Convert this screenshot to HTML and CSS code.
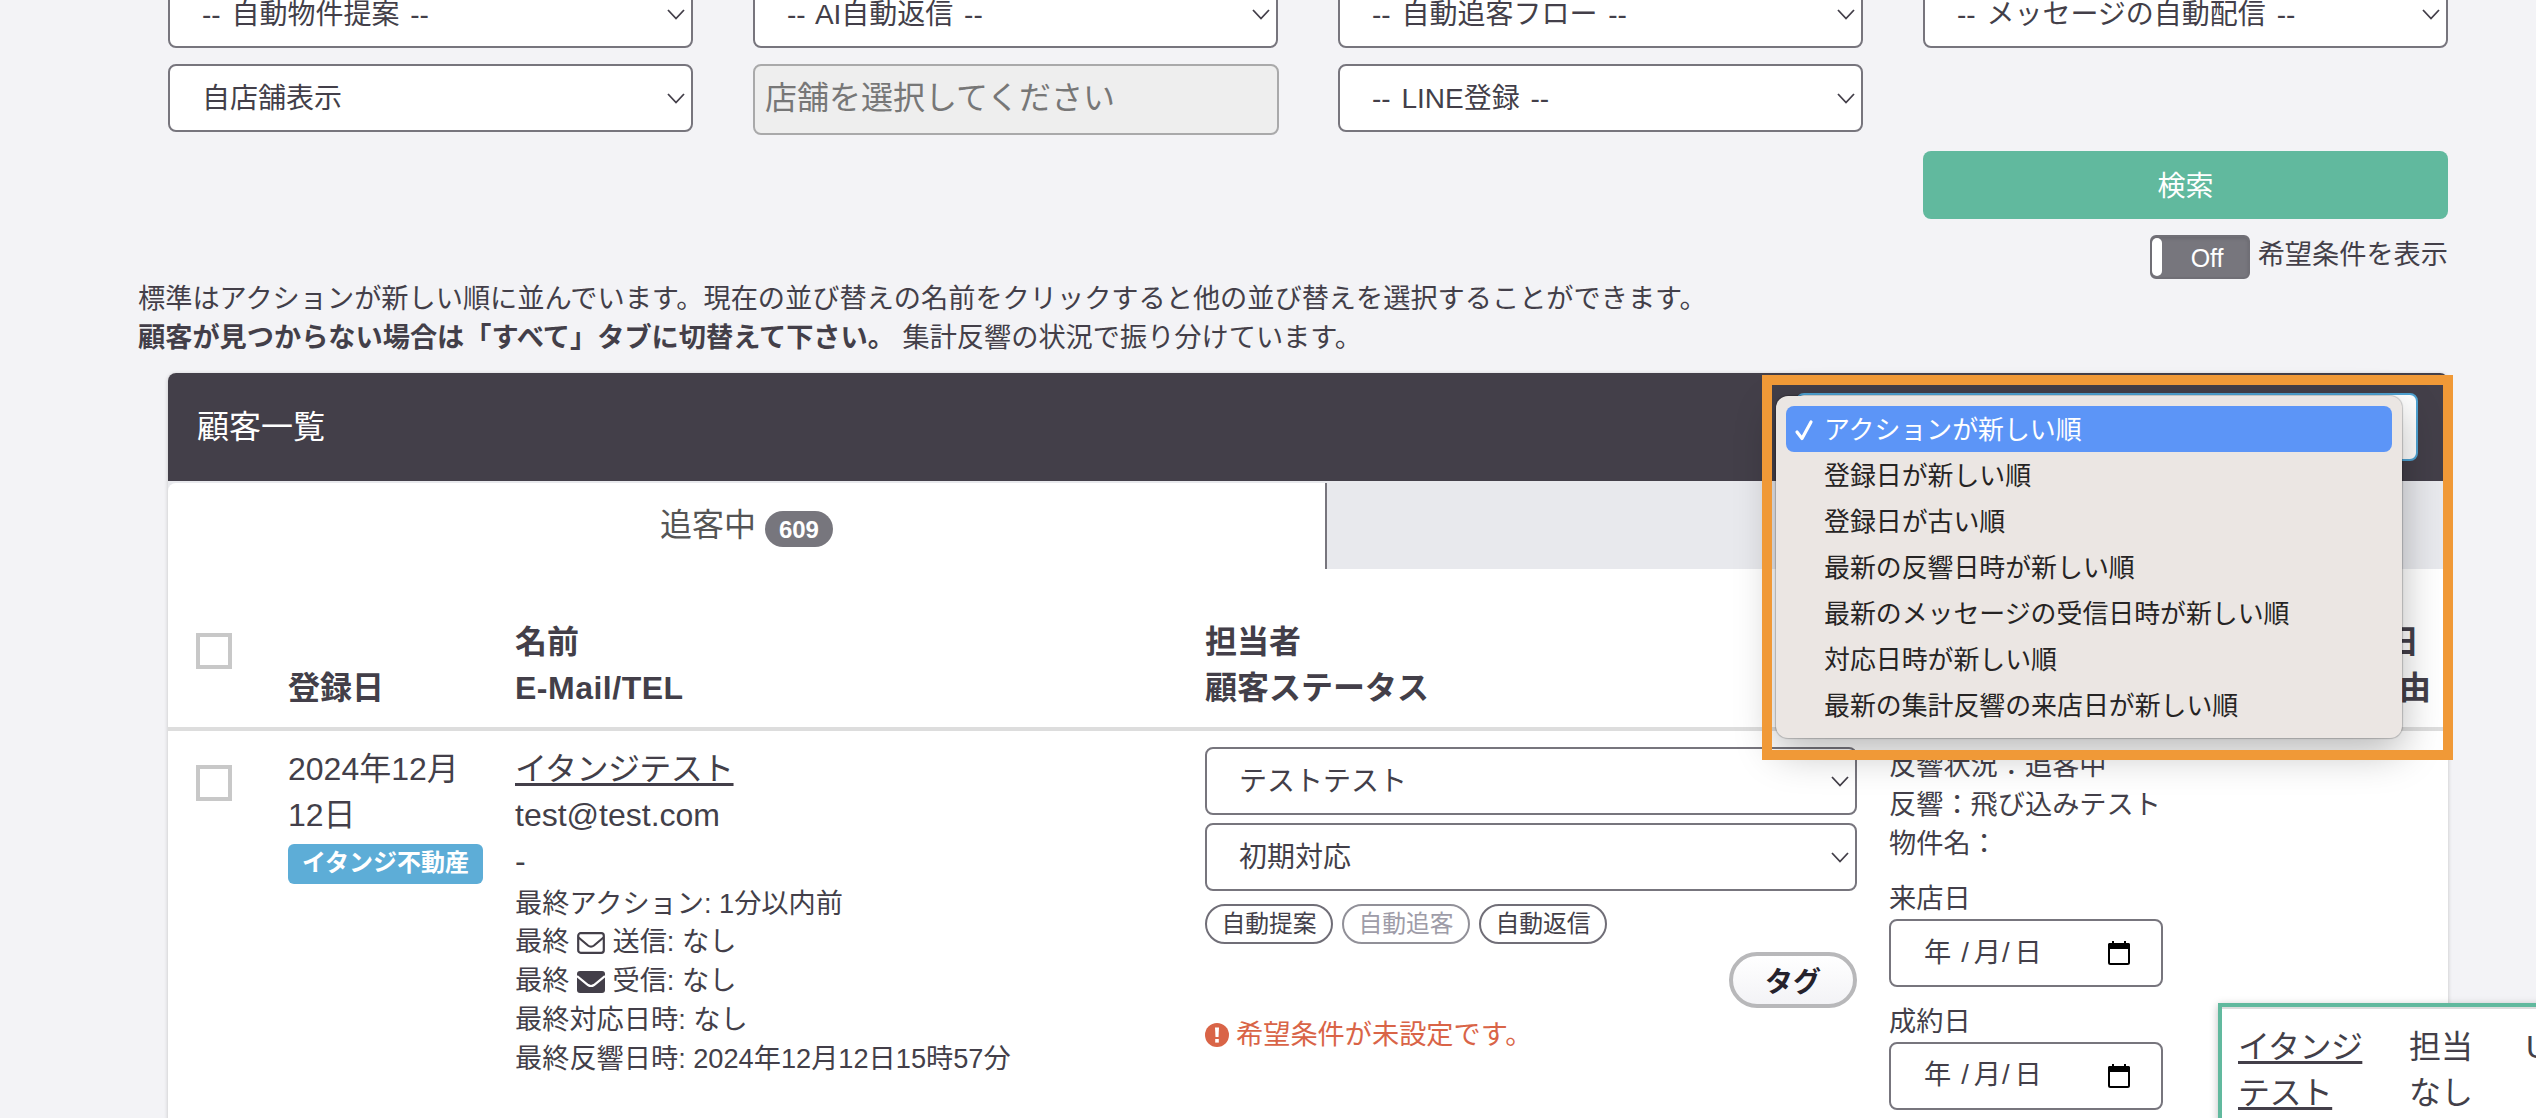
FILE: index.html
```html
<!DOCTYPE html>
<html lang="ja">
  <head>
    <meta charset="utf-8">
    <title>顧客一覧</title>
    <link rel="stylesheet" href="styles.css">
  </head>
  <body>
    <svg class="defs">
      <symbol id="chevron" viewBox="0 0 18 11"><path d="M1 1l8 8.5L17 1" fill="none" stroke="#433f49" stroke-width="1.8"/></symbol>
      <symbol id="calendar" viewBox="0 0 22 24"><path d="M5 0v3M17 0v3" stroke="#000" stroke-width="2"/><rect x="1" y="3" width="20" height="20" rx="1.5" fill="none" stroke="#000" stroke-width="2"/><path d="M0 3.5Q0 2 1.500 2h19Q22 2 22 3.500V8H0z"/></symbol>
    </svg>

    <div class="page">
      <div class="filters">
        <div class="select-wrap">
          <select class="select"><option>-- 自動物件提案 --</option></select>
          <svg class="chevron"><use href="#chevron"/></svg>
        </div>
        <div class="select-wrap">
          <select class="select"><option>-- AI自動返信 --</option></select>
          <svg class="chevron"><use href="#chevron"/></svg>
        </div>
        <div class="select-wrap">
          <select class="select"><option>-- 自動追客フロー --</option></select>
          <svg class="chevron"><use href="#chevron"/></svg>
        </div>
        <div class="select-wrap">
          <select class="select"><option>-- メッセージの自動配信 --</option></select>
          <svg class="chevron"><use href="#chevron"/></svg>
        </div>
        <div class="select-wrap">
          <select class="select"><option>自店舗表示</option></select>
          <svg class="chevron"><use href="#chevron"/></svg>
        </div>
        <input class="shop-input" type="text" placeholder="店舗を選択してください" disabled>
        <div class="select-wrap">
          <select class="select"><option>-- LINE登録 --</option></select>
          <svg class="chevron"><use href="#chevron"/></svg>
        </div>
      </div>

      <div class="actions">
        <button class="search-button">検索</button>
        <div class="toggle-row">
          <span class="toggle"><span class="knob"></span><span class="toggle-text">Off</span></span>
          <span class="toggle-label">希望条件を表示</span>
        </div>
      </div>

      <div class="notes">
        <div>標準はアクションが新しい順に並んでいます。現在の並び替えの名前をクリックすると他の並び替えを選択することができます。</div>
        <div><b>顧客が見つからない場合は「すべて」タブに切替えて下さい。</b> 集計反響の状況で振り分けています。</div>
      </div>

      <div class="card">
        <div class="card-header">
          <span class="card-title">顧客一覧</span>
          <div class="sort">
            <div class="highlight"></div>
            <ul class="menu">
              <li class="active"><svg class="check" viewBox="0 0 20 24"><path d="M3 14l5 6.500L17 4" fill="none" stroke="#fff" stroke-width="3.200" stroke-linecap="round" stroke-linejoin="round"/></svg>アクションが新しい順</li>
              <li>登録日が新しい順</li>
              <li>登録日が古い順</li>
              <li>最新の反響日時が新しい順</li>
              <li>最新のメッセージの受信日時が新しい順</li>
              <li>対応日時が新しい順</li>
              <li>最新の集計反響の来店日が新しい順</li>
            </ul>
          </div>
        </div>

        <div class="tabs">
          <div class="tab current">追客中 <span class="badge">609</span></div>
          <div class="tab"></div>
        </div>

        <table class="customers">
          <colgroup>
            <col class="col-check">
            <col class="col-date">
            <col class="col-name">
            <col class="col-staff">
            <col class="col-status">
          </colgroup>
          <thead>
            <tr>
              <th class="check-cell"><span class="checkbox"></span></th>
              <th>登録日</th>
              <th>名前<br><span class="mail-head">E-Mail/TEL</span></th>
              <th>担当者<br>顧客ステータス</th>
              <th class="last-head"><span class="visit-day">成約日</span><br>理由</th>
            </tr>
          </thead>
          <tbody>
            <tr>
              <td class="check-cell"><span class="checkbox"></span></td>
              <td>2024年12月<br>12日<br><span class="label">イタンジ不動産</span></td>
              <td>
                <a class="link">イタンジテスト</a><br>
                test@test.com<br>
                -
                <div class="small">
                  最終アクション: 1分以内前<br>
                  最終 <svg class="mail" viewBox="0 0 28 22"><rect x="1.200" y="1.200" width="25.600" height="19.600" rx="2.500" fill="none" stroke="#433f49" stroke-width="2.200"/><path d="M1.500 5.500l9.500 8q3 2.300 6 0l9.500-8" fill="none" stroke="#433f49" stroke-width="2.200"/></svg> 送信: なし<br>
                  最終 <svg class="mail" viewBox="0 0 28 22"><rect width="28" height="22" rx="3" fill="#433f49"/><path d="M0 5l11 9q3 2 6 0l11-9" fill="none" stroke="#fff" stroke-width="2.200"/></svg> 受信: なし<br>
                  最終対応日時: なし<br>
                  最終反響日時: 2024年12月12日15時57分
                </div>
              </td>
              <td>
                <div class="select-wrap">
                  <select class="select"><option>テストテスト</option></select>
                  <svg class="chevron"><use href="#chevron"/></svg>
                </div>
                <div class="select-wrap second">
                  <select class="select"><option>初期対応</option></select>
                  <svg class="chevron"><use href="#chevron"/></svg>
                </div>
                <div class="pills">
                  <span class="pill">自動提案</span>
                  <span class="pill off">自動追客</span>
                  <span class="pill">自動返信</span>
                </div>
                <div class="tag-row"><button class="tag-button">タグ</button></div>
                <div class="alert">
                  <svg class="alert-icon" viewBox="0 0 24 24"><circle cx="12" cy="12" r="12" fill="#d96447"/><path d="M10 4.500h4l-.5 9.500h-3z" fill="#fff"/><rect x="10.200" y="16" width="3.600" height="3.600" fill="#fff"/></svg>
                  希望条件が未設定です。
                </div>
              </td>
              <td class="small">
                反響状況：追客中<br>
                反響：飛び込みテスト<br>
                物件名：
                <div class="date-title">来店日</div>
                <div class="date"><span class="year">年</span>/<span>月</span>/<span>日</span><svg class="calendar"><use href="#calendar"/></svg></div>
                <div class="date-title">成約日</div>
                <div class="date"><span class="year">年</span>/<span>月</span>/<span>日</span><svg class="calendar"><use href="#calendar"/></svg></div>
              </td>
            </tr>
          </tbody>
        </table>
      </div>
    </div>

    <div class="popup">
      <a class="link popup-name">イタンジテスト</a>
      <span class="popup-staff">担当なし</span>
      <span>U</span>
    </div>
  </body>
</html>
```
FILE: styles.css
```css
* {
  box-sizing: border-box;
}

html, body {
  height: 1118px;
  overflow: hidden;
}

body {
  margin: 0;
  background: #f3f3f6;
  color: #433f49;
  font-family: "Liberation Sans", "Noto Sans CJK JP", sans-serif;
  font-size: 32px;
  line-height: 45.7px;
}

.defs {
  display: none;
}

.page {
  width: 2280px;
  margin: -20px 0 0 168px;
}

.filters {
  display: grid;
  grid-template-columns: repeat(4, 525px);
  column-gap: 60px;
  row-gap: 16px;
  height: 171px;
  align-items: start;
  align-content: start;
}

.select-wrap {
  position: relative;
  height: 68px;
}

.select {
  appearance: none;
  display: block;
  width: 100%;
  height: 68px;
  padding: 0 32px;
  border: 2px solid #77757d;
  border-radius: 8px;
  background: #fff;
  color: #433f49;
  font-family: inherit;
  font-size: 28px;
  word-spacing: 3px;
}

.chevron {
  position: absolute;
  right: 8px;
  top: 29px;
  width: 18px;
  height: 11px;
}

.shop-input {
  width: 526px;
  height: 71px;
  padding: 0 10px 3px;
  border: 2px solid #a9a9aa;
  border-radius: 8px;
  background: #eee;
  font-family: inherit;
  font-size: 32px;
}

.shop-input::placeholder {
  color: #777;
}

.actions {
  display: flex;
  flex-direction: column;
  align-items: flex-end;
}

.search-button {
  width: 525px;
  height: 68px;
  padding-bottom: 3px;
  border: none;
  border-radius: 8px;
  background: #61b99e;
  color: #fff;
  font-family: inherit;
  font-size: 28px;
}

.toggle-row {
  display: flex;
  height: 60px;
  padding-top: 16px;
  font-size: 27.2px;
}

.toggle {
  display: flex;
  width: 100px;
  height: 44px;
  margin-right: 8px;
  padding: 1px 0;
  border: 2px solid #706f76;
  border-radius: 6px;
  background: #77767d;
  box-shadow: inset 0 2px 3px rgba(0, 0, 0, 0.1);
}

.knob {
  width: 10px;
  height: 38px;
  border-radius: 5px;
  background: #fff;
}

.toggle-text {
  margin-left: 29px;
  color: #fff;
  font-size: 25px;
  line-height: 40px;
}

.toggle-label {
  line-height: 39px;
}

.notes {
  height: 94px;
  margin-left: -30px;
  padding-top: 1px;
  font-size: 27.2px;
  line-height: 38.9px;
}

.card {
  height: 780px;
  border-radius: 8px;
  background: #fff;
  box-shadow: 0 1px 4px rgba(0, 0, 0, 0.2);
}

.card-header {
  display: flex;
  justify-content: space-between;
  height: 108px;
  padding: 20px 30px 20px 29px;
  border-radius: 8px 8px 0 0;
  background: #433f49;
  color: #fff;
}

.card-title {
  line-height: 69px;
}

.sort {
  position: relative;
  width: 622px;
  height: 68px;
  border: 2px solid #4fa3d3;
  border-radius: 8px;
  background: #fff;
}

.highlight {
  position: absolute;
  z-index: 2;
  left: -36px;
  top: -20px;
  width: 691px;
  height: 385px;
  border: 10px solid #f09937;
}

.menu {
  position: absolute;
  z-index: 1;
  left: -22px;
  top: 1px;
  width: 626px;
  margin: 0;
  padding: 10px;
  border-radius: 12px;
  background: #ebe6e3;
  box-shadow: 0 0 1px 1px rgba(0, 0, 0, 0.2), 0 14px 40px rgba(0, 0, 0, 0.28);
  color: #262424;
  font-size: 25.9px;
  line-height: 48px;
  list-style: none;
}

.menu li {
  height: 46px;
  padding-left: 38px;
}

.menu .active {
  position: relative;
  border-radius: 8px;
  background: #5c95f7;
  color: #fff;
}

.check {
  position: absolute;
  left: 8px;
  top: 12px;
  width: 20px;
  height: 24px;
}

.tabs {
  display: flex;
  height: 88px;
  padding-top: 2px;
  background: #e8e9ed;
}

.tab {
  flex: 1;
  height: 86px;
}

.tab.current {
  flex: none;
  width: 1159px;
  border-right: 2px solid #77757d;
  border-radius: 8px 0 0 0;
  background: #fff;
  color: #555;
  line-height: 85px;
  text-align: center;
}

.badge {
  display: inline-block;
  width: 68px;
  height: 36px;
  border-radius: 18px;
  background: #77767d;
  color: #fff;
  font-size: 24px;
  font-weight: bold;
  line-height: 37px;
  vertical-align: -2px;
}

.customers {
  width: 2280px;
  margin-top: 35px;
  border-collapse: separate;
  border-spacing: 0;
  table-layout: fixed;
}

.col-check {
  width: 104px;
}

.col-date {
  width: 227px;
}

.col-name {
  width: 690px;
}

.col-staff {
  width: 684px;
}

.customers th {
  padding: 16px;
  border-bottom: 4px solid #ddd;
  text-align: left;
  vertical-align: bottom;
}

.customers td {
  padding: 16px;
  vertical-align: top;
}

.customers th.check-cell,
.customers td.check-cell {
  padding: 29px 28px;
  vertical-align: top;
}

.customers td.check-cell {
  padding-top: 34px;
}

.checkbox {
  display: block;
  width: 36px;
  height: 36px;
  border: 4px solid #c8c8c8;
  background: #fff;
}

.mail-head {
  letter-spacing: 0.5px;
}

.customers th.last-head {
  padding-right: 17px;
  text-align: right;
}

.visit-day {
  margin-right: 12px;
}

.label {
  display: block;
  width: 195px;
  height: 40px;
  margin-top: 5px;
  border-radius: 6px;
  background: #5dadd7;
  color: #fff;
  font-size: 24px;
  font-weight: bold;
  line-height: 38px;
  text-align: center;
}

.link {
  letter-spacing: -0.6px;
  text-decoration: underline;
  text-decoration-thickness: 3px;
  text-underline-offset: 3px;
}

.small,
.customers td.small {
  font-size: 27.2px;
  line-height: 38.9px;
}

.mail {
  width: 28px;
  height: 22px;
  vertical-align: -3px;
}

.select-wrap.second {
  margin-top: 8px;
}

.pills {
  display: flex;
  gap: 9px;
  margin-top: 13px;
}

.pill {
  width: 128px;
  height: 40px;
  border: 2px solid #706e77;
  border-radius: 20px;
  font-size: 23.8px;
  line-height: 36px;
  text-align: center;
}

.pill.off {
  border-color: #919098;
  color: #9e9ca8;
}

.tag-row {
  display: flex;
  justify-content: flex-end;
  margin-top: 8px;
}

.tag-button {
  width: 128px;
  height: 56px;
  border: 4px solid #b8b8ba;
  border-radius: 28px;
  background: linear-gradient(#fff, #f3f3f6);
  color: #25222c;
  font-family: inherit;
  font-size: 28px;
  font-weight: bold;
}

.alert {
  display: flex;
  align-items: center;
  gap: 7px;
  margin-top: 7px;
  color: #d96447;
  font-size: 27.2px;
  line-height: 39px;
}

.alert-icon {
  width: 24px;
  height: 24px;
}

.date-title {
  margin-top: 16px;
}

.date {
  display: flex;
  align-items: center;
  width: 274px;
  height: 68px;
  padding: 0 31px 0 33px;
  border: 2px solid #77757d;
  border-radius: 8px;
}

.year {
  margin-right: 10px;
}

.date span + span {
  margin: 0 1px 0 5px;
}

.calendar {
  width: 22px;
  height: 24px;
  margin-left: auto;
}

/* floating customer panel, bottom right corner */
.popup {
  position: absolute;
  z-index: 3;
  left: 2218px;
  top: 1003px;
  display: flex;
  width: 400px;
  height: 150px;
  padding: 18px 16px;
  border: 4px solid #61b99e;
  background: #fff;
  box-shadow: inset 0 2px 0 #ddd, 0 2px 8px rgba(0, 0, 0, 0.25);
}

.popup-name {
  width: 134px;
  margin-right: 37px;
}

.popup-staff {
  width: 64px;
  margin-right: 53px;
}
```
